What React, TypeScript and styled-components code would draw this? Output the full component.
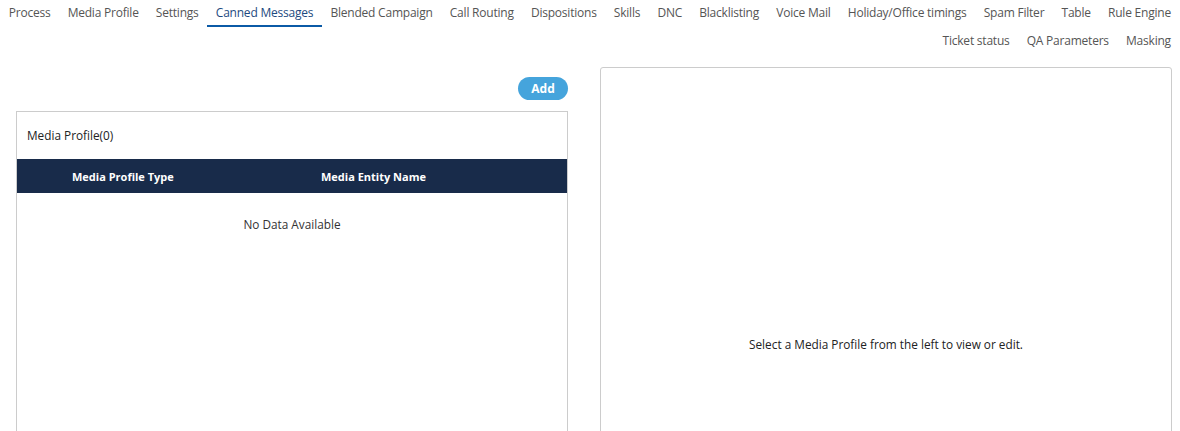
import styled, { createGlobalStyle } from "styled-components";

const tabs = [
  "Process",
  "Media Profile",
  "Settings",
  "Canned Messages",
  "Blended Campaign",
  "Call Routing",
  "Dispositions",
  "Skills",
  "DNC",
  "Blacklisting",
  "Voice Mail",
  "Holiday/Office timings",
  "Spam Filter",
  "Table",
  "Rule Engine",
  "Ticket status",
  "QA Parameters",
  "Masking",
];

const GlobalStyle = createGlobalStyle`
  html, body {
    margin: 0;
    padding: 0;
    background: #fff;
    font-family: "Open Sans", "Noto Sans", sans-serif;
    font-size: 11.8px;
    color: #333;
    height: 431px;
    overflow: hidden;
  }
`;

const App = () => {
  return (
    <>
      <GlobalStyle />
      <TabBar>
        {tabs.map((t) => (
          <Tab key={t} active={t === "Canned Messages"}>
            {t}
          </Tab>
        ))}
      </TabBar>
      <Content>
        <LeftColumn>
          <Toolbar>
            <AddButton>Add</AddButton>
          </Toolbar>
          <ListPanel>
            <PanelTitle>Media Profile(0)</PanelTitle>
            <TableHead>
              <HeadCell>Media Profile Type</HeadCell>
              <HeadCell>Media Entity Name</HeadCell>
            </TableHead>
            <EmptyRow>No Data Available</EmptyRow>
          </ListPanel>
        </LeftColumn>
        <DetailPanel>Select a Media Profile from the left to view or edit.</DetailPanel>
      </Content>
    </>
  );
};

export default App;

const TabBar = styled.nav`
  display: flex;
  flex-wrap: wrap;
  justify-content: flex-end;
  padding: 0 0.5px 0 0;
`;

const Tab = styled.div<{ active: boolean }>`
  height: 25px;
  line-height: 26px;
  padding: 0 8.6px;
  margin-bottom: 1px;
  font-size: 12px;
  letter-spacing: -0.22px;
  color: ${({ active }) => (active ? "#1d4a80" : "#555")};
  border-bottom: 2px solid ${({ active }) => (active ? "#0b5aa6" : "transparent")};
  white-space: nowrap;
  cursor: pointer;
`;

const Content = styled.main`
  display: grid;
  grid-template-columns: 552px 1fr;
  column-gap: 32px;
  padding: 0 8px 0 16px;
  margin-top: 1px;
`;

const LeftColumn = styled.section`
  display: flex;
  flex-direction: column;
  padding-top: 20px;
`;

const Toolbar = styled.div`
  display: flex;
  justify-content: flex-end;
  margin-bottom: 11px;
`;

const AddButton = styled.button`
  width: 50px;
  height: 23px;
  border: none;
  border-radius: 12px;
  background: #45a4dc;
  color: #fff;
  font-family: inherit;
  font-size: 12px;
  font-weight: 700;
  padding: 0;
  cursor: pointer;
`;

const ListPanel = styled.div`
  border: 1px solid #ccc;
  border-bottom: none;
  height: 320px;
`;

const PanelTitle = styled.div`
  height: 47px;
  line-height: 47px;
  padding-left: 10px;
  color: #222;
`;

const TableHead = styled.div`
  display: grid;
  grid-template-columns: 249px 1fr;
  height: 34px;
  align-items: center;
  background: #182b4a;
  padding-left: 55px;
`;

const HeadCell = styled.div`
  color: #fff;
  font-size: 11px;
  font-weight: 700;
`;

const EmptyRow = styled.div`
  text-align: center;
  padding-top: 23px;
  color: #333;
`;

const DetailPanel = styled.section`
  margin-top: 10px;
  height: 552px;
  border: 1px solid #ccc;
  border-radius: 3px;
  display: flex;
  align-items: center;
  justify-content: center;
  color: #222;
`;
